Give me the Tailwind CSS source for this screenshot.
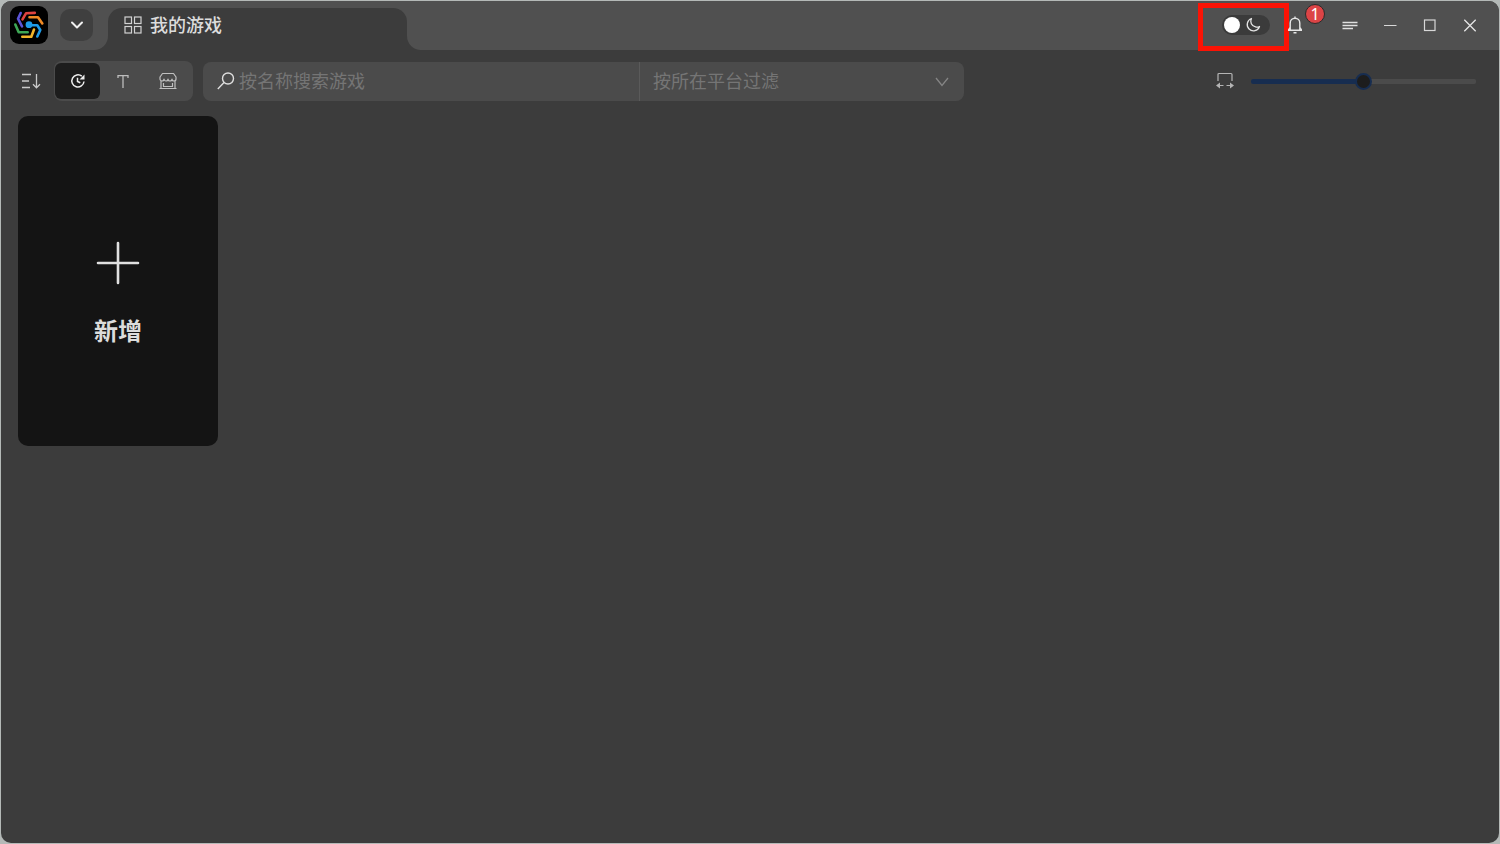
<!DOCTYPE html>
<html lang="zh-CN">
<head>
    <meta charset="UTF-8">
    <meta name="viewport" content="width=device-width, initial-scale=1.0">
    <title>我的游戏</title>
    <script src="https://cdn.jsdelivr.net/npm/@tailwindcss/browser@4"></script>
</head>
<body class="h-screen bg-[#b4b9b7] p-px font-['Noto_Sans','Noto_Sans_CJK_SC',sans-serif] text-[#dcdcdc]">
    <div class="flex h-full flex-col overflow-hidden rounded-[10px] bg-[#3c3c3c]">

        <!-- Title bar -->
        <header class="flex h-[49px] shrink-0 bg-[#505050] px-[9px]">
            <div class="flex items-center gap-3 pb-[2px]">
                <svg class="size-[38px] shrink-0" viewBox="0 0 38 38" fill="none" stroke-width="2.6" stroke-linecap="round" stroke-linejoin="round" aria-hidden="true">
                    <rect width="38" height="38" rx="9" fill="#000"/>
                    <path d="M10.700 7 8 12.700 12 20.300" stroke="#5b54d6"/>
                    <path d="M12.500 13.300 16 7.300 24.800 6.900" stroke="#e0433f"/>
                    <path d="M19.500 11.300H28L32.300 17.500" stroke="#f08a24"/>
                    <path d="M20 19.300H27.300L30.300 24 27.300 30.500" stroke="#1e9be8"/>
                    <path d="M24 23.500 21.300 30.700H12.300" stroke="#f2b52c"/>
                    <path d="M5.300 18.500 8.700 26.300H17.700" stroke="#3ea655"/>
                    <circle cx="19" cy="18.700" r="3.400" fill="#1e9be8"/>
                </svg>
                <button type="button" aria-label="切换" class="grid h-8 w-[33px] shrink-0 place-items-center rounded-[10px] bg-[#3f3f3f]">
                    <svg class="size-4" viewBox="0 0 16 16" fill="none" stroke="#f0f0f0" stroke-width="2" stroke-linecap="round" stroke-linejoin="round"><path d="M3 5.500 8 10.500 13 5.500"/></svg>
                </button>
            </div>

            <div class="relative ml-[15px] flex h-[42px] w-[299px] items-center gap-2 self-end rounded-t-[14px] bg-[#3c3c3c] pb-2 pl-4">
                <svg class="absolute right-full bottom-0 size-[14px]" viewBox="0 0 14 14" fill="#3c3c3c"><path d="M14 0V14H0A14 14 0 0 0 14 0Z"/></svg>
                <svg class="absolute bottom-0 left-full size-[14px]" viewBox="0 0 14 14" fill="#3c3c3c"><path d="M0 0V14H14A14 14 0 0 1 0 0Z"/></svg>
                <svg class="size-[18px]" viewBox="0 0 18 18" fill="none" stroke="#d2d2d2" stroke-width="1.200" aria-hidden="true">
                    <rect x="1" y="1" width="6.500" height="6.500"/><rect x="10.500" y="1" width="6.500" height="6.500"/>
                    <rect x="1" y="10.500" width="6.500" height="6.500"/><rect x="10.500" y="10.500" width="6.500" height="6.500"/>
                </svg>
                <h1 class="text-[18px] leading-7 font-medium">我的游戏</h1>
            </div>

            <div class="ml-auto flex items-center pb-[2px]">
                <div class="relative mr-2 flex">
                    <button type="button" role="switch" aria-checked="false" aria-label="深色模式" class="flex h-5 w-12 items-center gap-[5px] rounded-full bg-[#3b3b3b] pl-[2px]">
                        <span class="size-4 rounded-full bg-white"></span>
                        <svg class="size-4" viewBox="0 0 16 16" fill="none" stroke="#e4e4e4" stroke-width="1.300" stroke-linejoin="round"><path d="M6.500 1.500A6.300 6.300 0 1 0 14.500 9.500 5.300 5.300 0 0 1 10.500 9.800 5.600 5.600 0 0 1 6.500 1.500Z"/></svg>
                    </button>
                    <div class="pointer-events-none absolute -top-3 -left-6 h-12 w-[91px] border-5 border-[#fb1305]"></div>
                </div>
                <button type="button" aria-label="通知" class="relative mr-[18px] grid h-10 w-[34px] place-items-center">
                    <svg class="size-[18px]" viewBox="0 0 18 18" fill="none" stroke="#e6e6e6" stroke-width="1.400" stroke-linejoin="round"><path d="M2 14.300H16M4.200 14V7A4.800 4.800 0 0 1 13.800 7V14M7.500 16.800H10.500M9 .5V2.200M4.200 11.500 2.500 14M13.800 11.500 15.500 14"/></svg>
                    <span class="absolute -top-px left-[27px] grid size-5 place-items-center rounded-full border border-[#2a2a2a] bg-[#dc4446] text-[16px] leading-4 text-white">1</span>
                </button>
                <button type="button" aria-label="菜单" class="grid size-10 place-items-center">
                    <svg class="size-4" viewBox="0 0 16 16" stroke="#e0e0e0" stroke-width="1.500"><path d="M.5 5.500H15.500M.5 8.500H15.500M.5 11.500H11"/></svg>
                </button>
                <button type="button" aria-label="最小化" class="grid size-10 place-items-center">
                    <svg class="size-4" viewBox="0 0 16 16" stroke="#d8d8d8" stroke-width="1.200"><path d="M2 8.500H14.500"/></svg>
                </button>
                <button type="button" aria-label="最大化" class="grid size-10 place-items-center">
                    <svg class="size-4" viewBox="0 0 16 16" fill="none" stroke="#d8d8d8" stroke-width="1.200"><rect x="2.500" y="3" width="10.500" height="10.500"/></svg>
                </button>
                <button type="button" aria-label="关闭" class="grid size-10 place-items-center">
                    <svg class="size-4" viewBox="0 0 16 16" stroke="#e6e6e6" stroke-width="1.300"><path d="M2.300 2.800 13.700 14.200M13.700 2.800 2.300 14.200"/></svg>
                </button>
            </div>
        </header>

        <!-- Toolbar -->
        <div class="mt-[11px] flex items-center pr-[23px] pl-5">
            <button type="button" aria-label="排序" class="mr-[13px] grid h-9 w-5 place-items-center">
                <svg class="h-[18px] w-5" viewBox="0 0 20 18" fill="none" stroke="#c9c9c9" stroke-width="1.300"><path d="M1 2.500H10M1 9H8M1 15.500H9M15.500 2V15.500M12 12.300 15.500 15.800 19 12.300"/></svg>
            </button>
            <div class="flex h-10 rounded-lg bg-[#4b4b4b] py-[2px] pr-[3px] pl-px">
                <button type="button" aria-label="按最近游玩" class="grid w-[45px] place-items-center rounded-md bg-[#1d1d1d]">
                    <svg class="size-4" viewBox="0 0 16 16" fill="none" stroke="#eee" stroke-width="1.500"><path d="M11.800 3.200A6.100 6.100 0 1 0 14 8.500"/><path d="M7.500 4.800V8.500L10.300 9.800"/><path d="M14.500 1.500V6.500H9.500Z" fill="#eee" stroke="none"/></svg>
                </button>
                <button type="button" aria-label="按名称" class="grid w-[45px] place-items-center">
                    <svg class="size-4" viewBox="0 0 16 16" fill="none" stroke="#bdbdbd" stroke-width="1.300"><path d="M3 5V2.700H13V5M8 2.700V15"/></svg>
                </button>
                <button type="button" aria-label="按平台" class="grid w-[45px] place-items-center">
                    <svg class="size-[18px]" viewBox="0 0 18 18" fill="none" stroke="#c0c0c0" stroke-width="1.200" stroke-linejoin="round"><path d="M3.500 1.500H14.500L17 5V7A2 2 0 0 1 13 7 2 2 0 0 1 9 7 2 2 0 0 1 5 7 2 2 0 0 1 1 7V5ZM2 9V16.500M16 9V16.500M.5 16.500H17.500M4.500 11V14.500H13.500V11"/></svg>
                </button>
            </div>

            <div class="ml-[10px] flex h-[39px] w-[761px] overflow-hidden rounded-lg bg-[#4b4b4b]">
                <label class="flex w-[437px] items-center gap-1 border-r border-[#5a5a5a] pl-[14px]">
                    <svg class="size-[18px] shrink-0" viewBox="0 0 18 18" fill="none" stroke="#dedede" stroke-width="1.400"><circle cx="11" cy="6.500" r="5.500"/><path d="M7 10.500.8 17"/></svg>
                    <input type="text" aria-label="按名称搜索游戏" placeholder="按名称搜索游戏" class="h-full min-w-0 flex-1 bg-transparent text-[18px] outline-none placeholder:text-[#757575]">
                </label>
                <div class="relative flex-1">
                    <select aria-label="按所在平台过滤" class="size-full appearance-none bg-transparent pl-[13px] text-[18px] text-[#757575] outline-none">
                        <option>按所在平台过滤</option>
                    </select>
                    <svg class="pointer-events-none absolute top-3 right-[14px] size-4" viewBox="0 0 16 16" fill="none" stroke="#858585" stroke-width="1.300"><path d="M2 4 8 11.500 14 4"/></svg>
                </div>
            </div>

            <label class="ml-auto flex items-center gap-[17px]">
                <svg class="size-[18px]" viewBox="0 0 18 18" fill="none" stroke="#b4b4b4" stroke-width="1.200"><path d="M2 9V2.500Q2 1.500 3 1.500H15Q16 1.500 16 2.500V9"/><path d="M1.500 13.500H7.500M10.500 13.500H16.500"/><path d="M0 13.500 4 10.500V16.500ZM18 13.500 14 10.500V16.500Z" fill="#b4b4b4" stroke="none"/></svg>
                <input type="range" min="0" max="100" value="50" aria-label="卡片大小" class="h-[5px] w-[225px] appearance-none rounded-xs bg-[linear-gradient(to_right,#172d50_50%,#4b4b4b_50%)] [&::-webkit-slider-thumb]:size-[17px] [&::-webkit-slider-thumb]:appearance-none [&::-webkit-slider-thumb]:rounded-full [&::-webkit-slider-thumb]:border-2 [&::-webkit-slider-thumb]:border-[#172d50] [&::-webkit-slider-thumb]:bg-[#1d1d1d]">
            </label>
        </div>

        <!-- Game list -->
        <main class="flex flex-1 flex-wrap content-start gap-4 px-[17px] pt-[15px]">
            <button type="button" class="flex h-[330px] w-[200px] flex-col items-center justify-center gap-7 rounded-[10px] bg-[#141414] pt-7">
                <svg class="size-11" viewBox="0 0 44 44" stroke="#e0e0e0" stroke-width="2.600" stroke-linecap="round" aria-hidden="true"><path d="M22 2V42M2 22H42"/></svg>
                <span class="text-[24px] leading-9 font-bold">新增</span>
            </button>
        </main>
    </div>
</body>
</html>
